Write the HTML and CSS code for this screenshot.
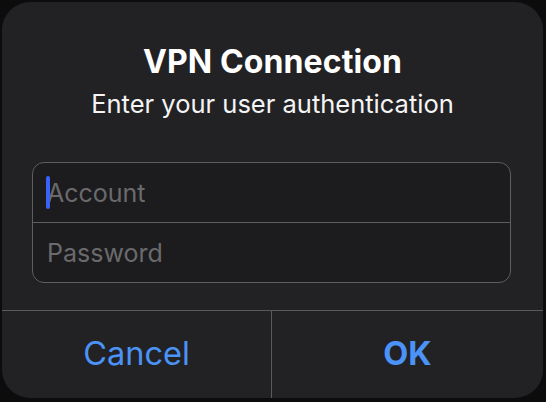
FILE: index.html
```html
<!DOCTYPE html>
<html>
<head>
<meta charset="utf-8">
<link rel="stylesheet" href="styles.css">
</head>
<body>
<div class="dialog">
  <div class="content">
    <h1 class="title">VPN Connection</h1>
    <p class="subtitle">Enter your user authentication</p>
    <div class="fields">
      <div class="field"><span class="caret"></span><span class="ph">Account</span></div>
      <div class="field"><span class="ph">Password</span></div>
    </div>
  </div>
  <div class="actions">
    <div class="btn">Cancel</div>
    <div class="btn bold">OK</div>
  </div>
</div>
</body>
</html>
```
FILE: styles.css
```css
html, body {
  margin: 0;
  padding: 0;
  background: #0c0c0c;
  width: 546px;
  height: 402px;
  overflow: hidden;
}
body {
  padding: 2px 3px 4px 2px;
  box-sizing: border-box;
  font-family: Inter, "Noto Sans", sans-serif;
}
.dialog {
  width: 541px;
  height: 396px;
  background: #222224;
  border-radius: 28px;
  display: flex;
  flex-direction: column;
  overflow: hidden;
}
.content {
  flex: 1;
  display: flex;
  flex-direction: column;
  align-items: center;
}
.title {
  margin: 42px 0 0;
  font-size: 32px;
  line-height: 36px;
  font-weight: 700;
  color: #ffffff;
  letter-spacing: 0.1px;
}
.subtitle {
  margin: 9px 0 0;
  font-size: 25.5px;
  line-height: 30px;
  color: #f4f4f4;
  font-weight: 400;
}
.fields {
  margin-top: 43px;
  width: 479px;
  margin-right: 2px;
  border: 1px solid #5e5e60;
  border-radius: 12px;
  background: #1c1c1e;
  box-sizing: border-box;
}
.field {
  height: 59px;
  display: flex;
  align-items: center;
  padding-left: 12px;
  position: relative;
}
.field + .field {
  border-top: 1px solid #5e5e60;
}
.ph {
  font-size: 25px;
  color: #6a6a6c;
  padding-left: 2px;
}
.caret {
  position: absolute;
  left: 13px;
  top: 13px;
  width: 4px;
  height: 33px;
  border-radius: 2px;
  background: #3b62f6;
}
.actions {
  height: 87px;
  border-top: 1px solid #5a5a5c;
  display: flex;
}
.btn {
  flex: 0 0 269px;
  display: flex;
  align-items: center;
  justify-content: center;
  font-size: 32.5px;
  color: #4b93f7;
  padding-bottom: 2px;
}
.btn + .btn {
  flex: 1;
  border-left: 1px solid #5a5a5c;
}
.bold {
  font-weight: 700;
}
```
